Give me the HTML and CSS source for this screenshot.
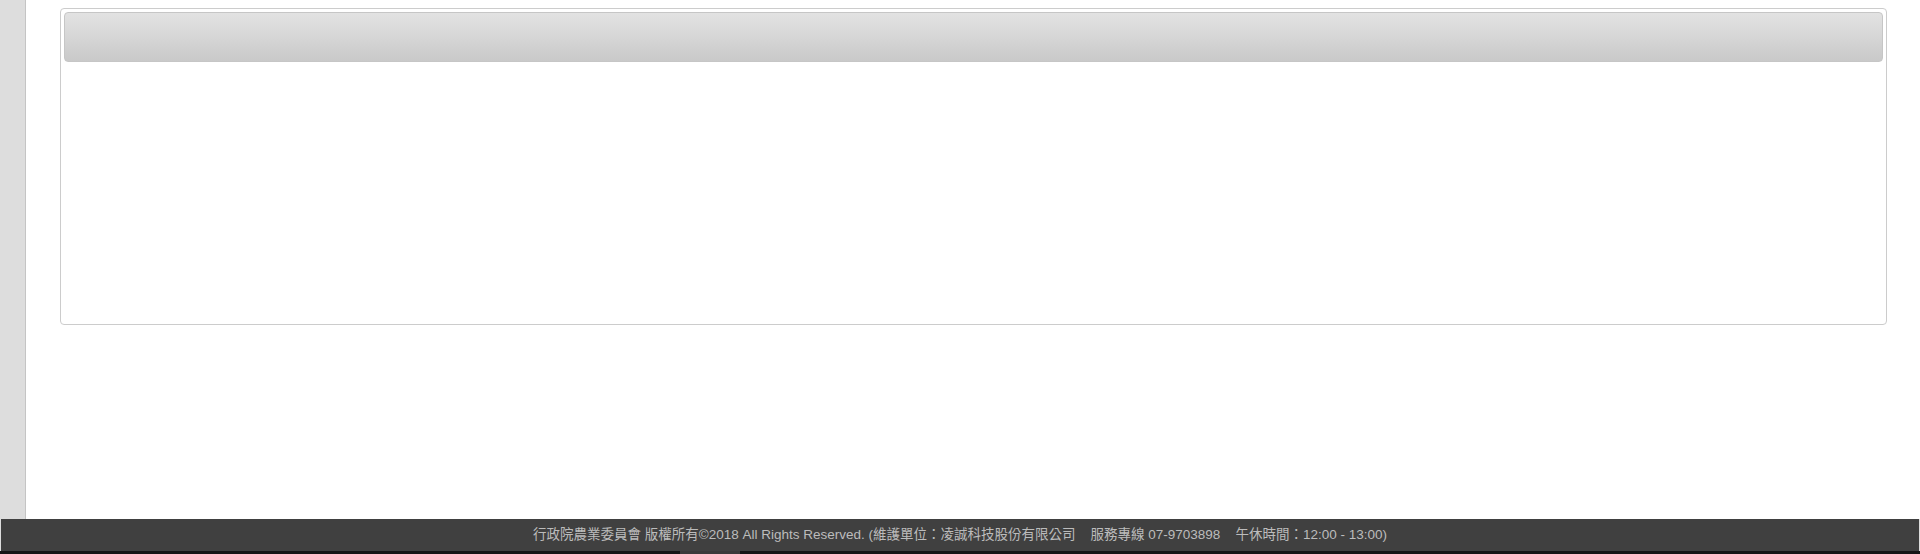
FILE: index.html
```html
<!DOCTYPE html>
<html lang="zh-Hant">
<head>
<meta charset="utf-8">
<title>行政院農業委員會</title>
<link rel="stylesheet" href="styles.css">
</head>
<body>
<div class="page">
  <div class="content">
    <aside class="sidebar"></aside>
    <main class="main">
      <section class="panel">
        <div class="panel-header"></div>
        <div class="panel-body"></div>
      </section>
    </main>
  </div>
  <footer class="footer">行政院農業委員會 版權所有©2018 All Rights Reserved. (維護單位：凌誠科技股份有限公司&nbsp;&nbsp;&nbsp; 服務專線 07-9703898&nbsp;&nbsp;&nbsp; 午休時間：12:00 - 13:00)</footer>
  <div class="bottom-strip"><span class="strip-mark"></span></div>
</div>
</body>
</html>
```
FILE: styles.css
```css
html, body {
  margin: 0;
  padding: 0;
  height: 100%;
  background: #fff;
  font-family: "Liberation Sans", "Noto Sans CJK TC", sans-serif;
}
.page {
  display: flex;
  flex-direction: column;
  height: 554px;
  background: #dddddd;
}
.content {
  flex: 1;
  display: flex;
  min-height: 0;
}
.sidebar {
  width: 25px;
  background: #dddddd;
  border-right: 1px solid #c4c4c4;
  flex: none;
}
.main {
  flex: 1;
  background: #fff;
  padding: 8px 33px 0 34px;
}
.panel {
  height: 317px;
  box-sizing: border-box;
  border: 1px solid #cccccc;
  border-radius: 4px;
  padding: 3px 3px;
  background: #fff;
}
.panel-header {
  height: 50px;
  box-sizing: border-box;
  border: 1px solid #c6c6c6;
  border-radius: 4px;
  background: linear-gradient(to bottom, #e2e2e2 0%, #d6d6d6 50%, #c9c9c9 100%);
}
.footer {
  height: 32px;
  margin: 0 1px;
  background: #404040;
  color: #bcbcbc;
  font-size: 13.5px;
  line-height: 31px;
  text-align: center;
  white-space: nowrap;
}
.bottom-strip {
  height: 3px;
  background: #151515;
  position: relative;
}
.strip-mark {
  position: absolute;
  left: 680px;
  top: 0;
  width: 60px;
  height: 3px;
  background: #3a3a3a;
}
```
